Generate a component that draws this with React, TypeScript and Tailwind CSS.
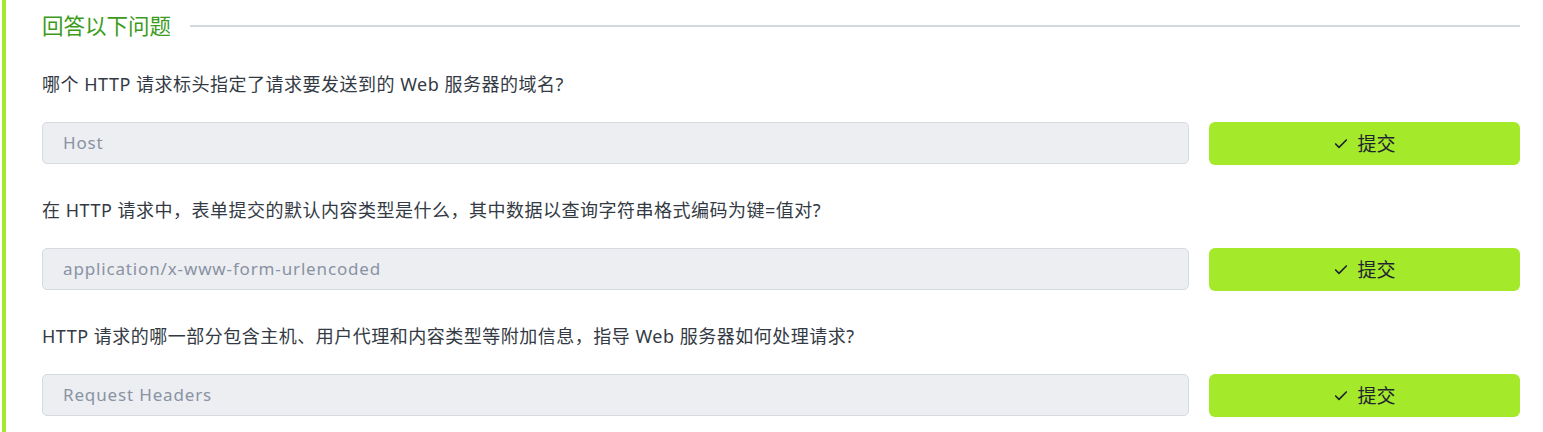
import { Check } from 'lucide-react';

const questions = [
  {
    text: '哪个 HTTP 请求标头指定了请求要发送到的 Web 服务器的域名?',
    answer: 'Host',
  },
  {
    text: '在 HTTP 请求中，表单提交的默认内容类型是什么，其中数据以查询字符串格式编码为键=值对?',
    answer: 'application/x-www-form-urlencoded',
  },
  {
    text: 'HTTP 请求的哪一部分包含主机、用户代理和内容类型等附加信息，指导 Web 服务器如何处理请求?',
    answer: 'Request Headers',
  },
];

const sans = "font-['Noto_Sans','Noto_Sans_CJK_SC',sans-serif]";

export default function App() {
  return (
    <div className="min-h-[432px] bg-white pl-0.5">
      <div className="border-l-4 border-[#a4e92b] min-h-[432px] pl-9 pr-[23px] pt-3">
        {/* Header */}
        <div className="flex items-center gap-[19px] h-7">
          <h2 className={`${sans} text-[21.5px] leading-7 text-[#3c9b1c]`}>回答以下问题</h2>
          <div className="flex-1 h-[2px] bg-[#d4d7dc]" />
        </div>

        {/* Questions */}
        <div className="mt-8">
          {questions.map((q) => (
            <div key={q.answer} className="mb-[33px]">
              <p className={`${sans} text-[18px] leading-6 tracking-[0.5px] text-[#333a44]`}>{q.text}</p>
              <div className="flex gap-5 mt-[26px]">
                <div className="flex-1 h-[42px] rounded-[5px] border border-[#d6dae1] bg-[#eceef2] flex items-center pl-5">
                  <span className={`${sans} text-[17px] tracking-[0.05em] text-[#8a92a3]`}>{q.answer}</span>
                </div>
                <button className="w-[311px] h-[43px] rounded-[6px] bg-[#a4ea2a] flex items-center justify-center gap-2 text-[#1f2430]">
                  <Check className="w-4 h-4" strokeWidth={2.5} />
                  <span className={`${sans} text-[19px] leading-6`}>提交</span>
                </button>
              </div>
            </div>
          ))}
        </div>
      </div>
    </div>
  );
}
